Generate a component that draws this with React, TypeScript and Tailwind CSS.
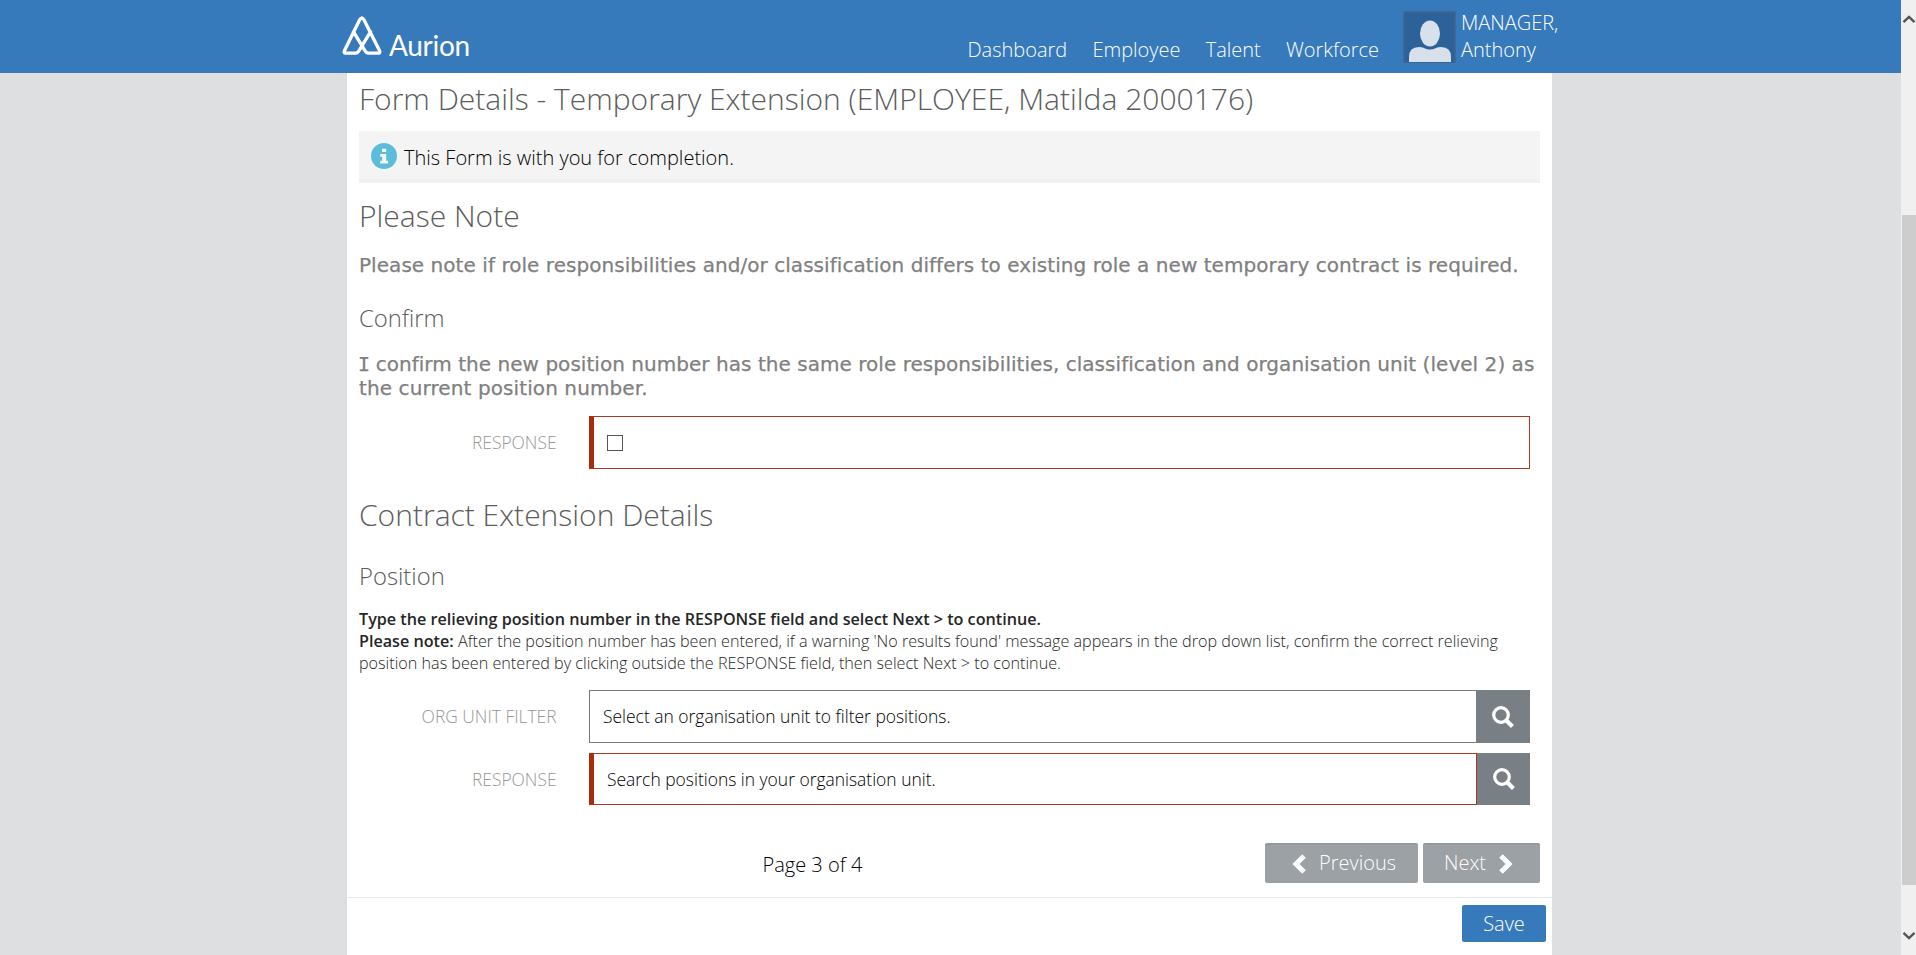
import React from "react";

const NAV = ["Dashboard", "Employee", "Talent", "Workforce"];

function LogoMark() {
  return (
    <svg viewBox="0 0 40 40" className="mt-[15px] h-[40px] w-[40px] shrink-0" fill="none" stroke="#fff" strokeWidth="3.3" strokeLinejoin="round" strokeLinecap="round">
      <path d="M28.6 16.6 L16.6 36.4 Q15.5 38.2 13.4 38.2 L3.6 38.2 Q1.4 38.1 2.4 35.8 L17.8 4.6 Q19.8 1.2 21.8 4.6 L37.6 35.8 Q38.6 38.1 36.4 38.2 L26.6 38.2 Q24.5 38.2 23.4 36.4 L11.4 16.6" />
    </svg>
  );
}

function Avatar() {
  return (
    <svg viewBox="0 0 53 52" className="ml-[24px] mt-[11px] h-[52px] w-[53px] shrink-0">
      <rect width="53" height="52" fill="#45698e" />
      <rect x="1.5" y="1.5" width="50" height="50" fill="#2c6299" />
      <ellipse cx="27" cy="22.5" rx="10" ry="13" fill="#d8e0ec" />
      <path d="M6 51 V46 Q6 36 16 36 Q19 36 21 37 Q27 40 33 37 Q35 36 38 36 Q48 36 48 46 V51 Z" fill="#d8e0ec" />
    </svg>
  );
}

function InfoIcon() {
  return (
    <svg viewBox="0 0 26 26" className="mb-[4px] h-[26px] w-[26px] shrink-0">
      <circle cx="13" cy="13" r="13" fill="#5bbdd9" />
      <path d="M11 5.7h4.2v3.4H11z M9.2 11h6v6.7h1.9v2.7H9.2v-2.7h2v-4h-2z" fill="#f4f4f4" />
    </svg>
  );
}

function SearchButton() {
  return (
    <button className="flex h-full w-full items-center justify-center bg-[#798085]">
      <svg viewBox="0 0 22 22" className="h-[22px] w-[22px]" fill="none" stroke="#fff">
        <circle cx="9" cy="9" r="7.3" strokeWidth="3.2" />
        <path d="M14.2 14.2 L20.4 20.4" strokeWidth="4.2" />
      </svg>
    </button>
  );
}

function Chevron({ left = false }: { left?: boolean }) {
  return (
    <svg viewBox="0 0 14 20" className="h-[20px] w-[14px]" fill="none" stroke="#fff" strokeWidth="5">
      <path d={left ? "M12 2 L4 10 L12 18" : "M2 2 L10 10 L2 18"} />
    </svg>
  );
}

function Label({ children }: { children: React.ReactNode }) {
  return (
    <div className="w-[197.5px] shrink-0 pb-[1px] text-right text-[17.4px] leading-[22px] text-[#969696]">{children}</div>
  );
}

function ScrollBar() {
  return (
    <div className="flex h-full w-[15px] shrink-0 flex-col bg-[#f0f0f0] pl-px">
      <div className="flex h-[215px] pt-[14px]">
        <svg viewBox="0 0 14 10" className="h-[10px] w-[14px]" fill="none" stroke="#555" strokeWidth="2.4">
          <path d="M1.5 8.2 L7 2.9 L12.5 8.2" />
        </svg>
      </div>
      <div className="h-[670px] bg-[#cdcdcd]" />
      <div className="flex pt-[46px]">
        <svg viewBox="0 0 14 10" className="h-[10px] w-[14px]" fill="none" stroke="#555" strokeWidth="2.4">
          <path d="M1.5 1.8 L7 7.1 L12.5 1.8" />
        </svg>
      </div>
    </div>
  );
}

export default function App() {
  return (
    <div className="flex h-[955px] w-[1916px] overflow-hidden bg-[#dddfe1] font-['Open_Sans',sans-serif] font-light">
      <div className="flex min-w-0 flex-1 flex-col">
        <header className="flex h-[73px] shrink-0 bg-[#377abb] pl-[341.5px] text-[20px] leading-[27px] text-white">
          <LogoMark />
          <div className="ml-[7.5px] mt-[28px] w-[82px] whitespace-nowrap font-['Lato',sans-serif] text-[28px] font-normal leading-[34px] tracking-[-0.3px]">
            Aurion
          </div>
          <nav className="ml-[496.5px] flex gap-[25.2px] pt-[36px]">
            {NAV.map((item) => (
              <a key={item}>{item}</a>
            ))}
          </nav>
          <Avatar />
          <div className="ml-[5px] pt-[9px]">
            <div>MANAGER,</div>
            <div>Anthony</div>
          </div>
        </header>

        <main className="ml-[347px] flex w-[1205px] flex-1 flex-col bg-white">
          <div className="flex flex-col pl-[12px] pr-[12px] pt-[6px]">
            <h1 className="whitespace-nowrap text-[30px] leading-[40px] text-[#5c5c5c]">
              Form Details - Temporary Extension (EMPLOYEE, Matilda 2000176)
            </h1>

            <div className="mt-[12px] flex h-[52px] items-center gap-[7px] border-b-4 border-[#f1f1f1] bg-[#f4f4f4] pl-[12px] pt-[5px] text-[20px] text-black">
              <InfoIcon />
              <span>This Form is with you for completion.</span>
            </div>

            <h2 className="mt-[13px] text-[30px] leading-[40px] text-[#5c5c5c]">Please Note</h2>
            <p className="mt-[17px] whitespace-nowrap font-['DejaVu_Sans',sans-serif] text-[20px] font-normal leading-[24px] tracking-[0.05px] text-[#808080] [-webkit-text-stroke:0.25px_#808080]">
              Please note if role responsibilities and/or classification differs to existing role a new temporary contract is required.
            </p>

            <h3 className="mt-[25px] text-[23.8px] leading-[32px] text-[#5c5c5c]">Confirm</h3>
            <p className="mt-[18px] whitespace-nowrap font-['DejaVu_Sans',sans-serif] text-[20px] font-normal leading-[24px] tracking-[0.04px] text-[#808080] [-webkit-text-stroke:0.25px_#808080]">
              <span className="-ml-[1px] font-['DejaVu_Sans_Mono',monospace] tracking-[-0.8px]">I</span> confirm the new position number has the same role responsibilities, classification and organisation unit (level 2) as
              <br />
              <span className="tracking-[0.1px]">the current position number.</span>
            </p>

            <div className="mt-[16px] flex h-[53px] items-center">
              <Label>RESPONSE</Label>
              <div className="ml-[32.5px] flex h-full w-[941px] items-center border border-l-[5px] border-[#a93a20] border-l-[#a92c0c] pl-[13px]">
                <div className="h-[16px] w-[16px] border-[1.5px] border-[#555]" />
              </div>
            </div>

            <h2 className="mt-[26px] text-[30px] leading-[40px] text-[#5c5c5c]">Contract Extension Details</h2>
            <h3 className="mt-[25px] text-[23.8px] leading-[32px] text-[#5c5c5c]">Position</h3>

            <p className="mt-[16px] whitespace-nowrap text-[16.16px] leading-[22px] text-[#262626]">
              <b className="font-semibold">Type the relieving position number in the RESPONSE field and select Next &gt; to continue.</b>
              <br />
              <b className="font-semibold">Please note:</b> After the position number has been entered, if a warning 'No results found' message appears in the drop down list, confirm the correct relieving
              <br />
              position has been entered by clicking outside the RESPONSE field, then select Next &gt; to continue.
            </p>

            <div className="mt-[16px] flex h-[53px] items-center">
              <Label>ORG UNIT FILTER</Label>
              <div className="ml-[32.5px] flex h-full w-[887px] items-center border border-r-0 border-[#757a7d] pl-[13px] text-[17.45px] text-black">
                Select an organisation unit to filter positions.
              </div>
              <div className="h-full w-[54px]">
                <SearchButton />
              </div>
            </div>
            <div className="mt-[10px] flex h-[52px] items-center">
              <Label>RESPONSE</Label>
              <div className="ml-[32.5px] flex h-full w-[888px] items-center border border-l-[5px] border-[#a93a20] border-l-[#a92c0c] pl-[13px] text-[17.45px] text-black">
                Search positions in your organisation unit.
              </div>
              <div className="h-full w-[53px]">
                <SearchButton />
              </div>
            </div>

            <div className="mt-[38px] flex h-[40px] items-center text-[20px] text-white">
              <div className="w-[906px] pl-[403.5px] pt-[4px] text-black">Page 3 of 4</div>
              <button className="flex h-full w-[153px] items-center rounded-[2px] border-t-2 border-[#939a9f] bg-[#9ba1a5] pl-[27px]">
                <Chevron left />
                <span className="mb-[3px] ml-[13px]">Previous</span>
              </button>
              <button className="ml-[5px] flex h-full w-[117px] items-center rounded-[2px] border-t-2 border-[#939a9f] bg-[#9ba1a5] pl-[21px]">
                <span className="mb-[3px] mr-[12.5px]">Next</span>
                <Chevron />
              </button>
            </div>
          </div>

          <div className="mt-[14px] flex justify-end border-t border-[#e3e9ee] pr-[6px] pt-[7px]">
            <button className="h-[37px] w-[84px] rounded-[2px] bg-[#377abb] text-[20px] text-white">Save</button>
          </div>
        </main>
      </div>
      <ScrollBar />
    </div>
  );
}
